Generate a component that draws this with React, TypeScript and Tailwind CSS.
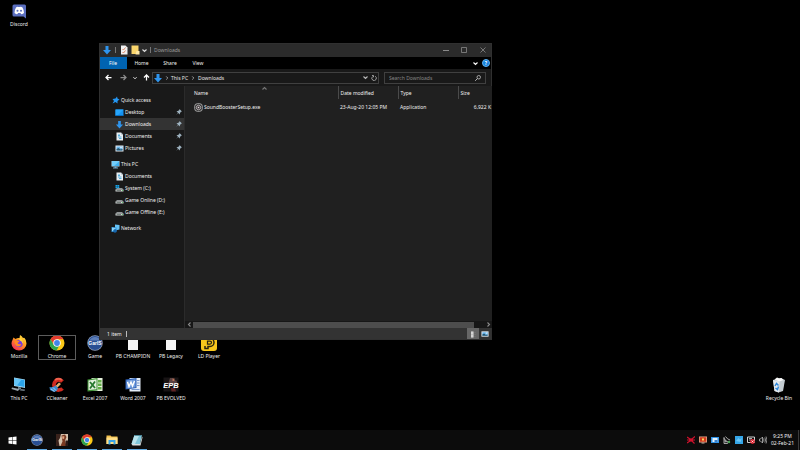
import React from "react";

type IconProps = { className?: string };

function DownArrow({ className = "size-[10px]" }: IconProps) {
  return (
    <svg viewBox="0 0 20 20" className={className} aria-hidden="true">
      <path d="M7 2h6v8h5l-8 9-8-9h5z" fill="#2f95ee" />
    </svg>
  );
}

function Chevron({ className = "size-[5px]" }: IconProps) {
  return (
    <svg viewBox="0 0 10 10" className={className} aria-hidden="true">
      <path d="M1 3l4 4 4-4" fill="none" stroke="currentColor" strokeWidth="2.2" />
    </svg>
  );
}

function Arrow({ className = "size-[7px]" }: IconProps) {
  return (
    <svg viewBox="0 0 14 14" className={className} aria-hidden="true">
      <path d="M13 7H2M7 2L2 7l5 5" fill="none" stroke="currentColor" strokeWidth="2.500" />
    </svg>
  );
}

function Pin({ className = "size-[6px]" }: IconProps) {
  return (
    <svg viewBox="0 0 12 12" className={className} aria-hidden="true">
      <path d="M7 0l5 5-2 .5L8 8l-.5 3L4.500 8 0 12l4-4.500L1 4.500 4 4l2.500-2z" fill="#9db1be" />
    </svg>
  );
}

function Star({ className = "size-[8px]" }: IconProps) {
  return (
    <svg viewBox="0 0 16 16" className={className} aria-hidden="true">
      <path d="M10 1l1 4 4 2-4 3v5l-4-3-6 3 3-5-3-4 6-1z" fill="#2497f3" />
    </svg>
  );
}

function DesktopIcon({ className = "size-[9px]" }: IconProps) {
  return (
    <svg viewBox="0 0 18 18" className={className} aria-hidden="true">
      <path d="M1 3h16v12H1z" fill="#1593f2" />
      <path d="M1 3h16L5 15H1z" fill="#27a5fb" />
      <path d="M1 14h16v2H1z" fill="#0870c4" />
    </svg>
  );
}

function DocumentIcon({ className = "size-[9px]" }: IconProps) {
  return (
    <svg viewBox="0 0 18 18" className={className} aria-hidden="true">
      <path d="M3 1h9l4 4v12H3z" fill="#e8eef2" />
      <path d="M12 1v4h4z" fill="#a9bac5" />
      <path d="M6 5h4v3H6zM6 9h7v2H6zM8 12h5v2H8z" fill="#57afe0" />
    </svg>
  );
}

function PicturesIcon({ className = "size-[9px]" }: IconProps) {
  return (
    <svg viewBox="0 0 18 18" className={className} aria-hidden="true">
      <path d="M1 3h16v12H1z" fill="#e6edf3" />
      <path d="M3 5h12v8H3z" fill="#6cb7ed" />
      <path d="M3 13v-3l4-2 4 3 4-1v3z" fill="#28566e" />
      <circle cx="12" cy="7" r="1.500" fill="#fff" />
    </svg>
  );
}

function MonitorIcon({ className = "size-[9px]" }: IconProps) {
  return (
    <svg viewBox="0 0 18 18" className={className} aria-hidden="true">
      <path d="M1 2h16v11H1z" fill="#b7dff5" />
      <path d="M2 3h14v9H2z" fill="#3fb2f2" />
      <path d="M2 3h14L6 12H2z" fill="#72cdfa" />
      <path d="M7 13h4v2h3v2H4v-2h3z" fill="#75a8c7" />
    </svg>
  );
}

function DriveIcon({ className = "size-[9px]", system = false }: IconProps & { system?: boolean }) {
  return (
    <svg viewBox="0 0 18 18" className={className} aria-hidden="true">
      <path d="M4 8h10l3 3H1z" fill="#8f9496" />
      <path d="M1 11h16v4H1z" fill="#d3d7d7" />
      <path d="M3 12.500h9V14H3z" fill="#54605d" />
      <path d="M14 12h2v2h-2z" fill="#5fc46e" />
      {system && <path d="M1 2h3.500v3H1zM5 2h3.500v3H5zM1 5.500h3.500v3H1zM5 5.500h3.500v3H5z" fill="#16a2e8" />}
    </svg>
  );
}

function NetworkIcon({ className = "size-[9px]" }: IconProps) {
  return (
    <svg viewBox="0 0 18 18" className={className} aria-hidden="true">
      <path d="M8 1l9 1v9l-9 2z" fill="#65c2f5" />
      <path d="M1 6l10 1v8L1 16z" fill="#2a8fd9" />
      <path d="M2 7l8 1-6 6-2 .5z" fill="#8bd4f8" />
      <circle cx="8" cy="14" r="3.500" fill="#1766ad" />
    </svg>
  );
}

function FolderIcon({ className = "size-[10px]" }: IconProps) {
  return (
    <svg viewBox="0 0 20 20" className={className} aria-hidden="true">
      <path d="M3 1h14v17H3z" fill="#f9d56c" />
      <path d="M13 12h6v7h-8z" fill="#ffe9a6" />
    </svg>
  );
}

function PropertiesIcon({ className = "size-[10px]" }: IconProps) {
  return (
    <svg viewBox="0 0 20 20" className={className} aria-hidden="true">
      <path d="M4 1h9l4 4v14H4z" fill="#f1f1f1" />
      <path d="M7 8l2 2 4-5M7 14l2 2 4-5" fill="none" stroke="#d97b55" strokeWidth="1.700" />
    </svg>
  );
}

function ExeIcon({ className = "size-[9px]" }: IconProps) {
  return (
    <svg viewBox="0 0 18 18" className={className} aria-hidden="true">
      <rect x="1.500" y="1.500" width="15" height="15" rx="5" fill="#222" stroke="#b9b9b9" strokeWidth="1.800" />
      <circle cx="9" cy="9" r="4.500" fill="#4c4548" stroke="#c9c4c6" strokeWidth="1.500" />
      <circle cx="9" cy="9" r="1.500" fill="#e1dadd" />
    </svg>
  );
}

function SearchIcon({ className = "size-[6px]" }: IconProps) {
  return (
    <svg viewBox="0 0 12 12" className={className} aria-hidden="true">
      <circle cx="7.500" cy="4.500" r="3.500" fill="none" stroke="currentColor" strokeWidth="1.500" />
      <path d="M5 7l-4.500 4.500" stroke="currentColor" strokeWidth="1.800" />
    </svg>
  );
}

function RefreshIcon({ className = "size-[6px]" }: IconProps) {
  return (
    <svg viewBox="0 0 12 12" className={className} aria-hidden="true">
      <path d="M8 2.500A4.500 4.500 0 1 1 3.500 3M2 1h3v3.500" fill="none" stroke="currentColor" strokeWidth="1.600" />
    </svg>
  );
}

function DiscordIcon({ className = "size-4" }: IconProps) {
  return (
    <svg viewBox="0 0 32 32" className={className} aria-hidden="true">
      <path d="M6 3h21a3 3 0 0 1 3 3v25l-5-4H6a3 3 0 0 1-3-3V6a3 3 0 0 1 3-3z" fill="#5b6fc0" />
      <path d="M10 9q3-2 4-1h4q2-1 5 1 3 5 3 11-3 3-6 2l-1-2h-5l-1 2q-3 1-6-2 0-6 3-11z" fill="#fff" />
      <circle cx="13" cy="15.500" r="2" fill="#5b6fc0" />
      <circle cx="20" cy="15.500" r="2" fill="#5b6fc0" />
    </svg>
  );
}

function FirefoxIcon({ className = "size-4" }: IconProps) {
  return (
    <svg viewBox="0 0 32 32" className={className} aria-hidden="true">
      <defs>
        <linearGradient id="fox" x1="0.900" y1="0" x2="0.200" y2="1">
          <stop offset="0" stopColor="#fff04a" />
          <stop offset="0.450" stopColor="#ff9a1f" />
          <stop offset="1" stopColor="#f5245c" />
        </linearGradient>
      </defs>
      <path d="M3 10l2-5 4 3q4-3 8-2l1-6q4 2 6 6 2-1 3 0 4 4 4 11a15 14 0 0 1-30 0q0-4 2-7z" fill="url(#fox)" />
      <circle cx="16" cy="17" r="7.500" fill="#7a3be0" />
      <path d="M7 11q6-2 10 2l-4 3q2 4 8 2-2 6-8 5-6-2-6-12z" fill="#ff8a22" />
      <path d="M19 5q6 6 5 13-2-6-8-8z" fill="#ffd83a" />
    </svg>
  );
}

function ChromeIcon({ className = "size-4" }: IconProps) {
  return (
    <svg viewBox="0 0 32 32" className={className} aria-hidden="true">
      <circle cx="16" cy="16" r="15" fill="#fbc917" />
      <path d="M3 8.500A15 15 0 0 1 29 8.500H16L9.500 19z" fill="#e33b2e" />
      <path d="M3 8.500A15 15 0 0 0 15 31l6-10.500H10z" fill="#2ea44f" />
      <circle cx="16" cy="16" r="7.500" fill="#fff" />
      <circle cx="16" cy="16" r="5.800" fill="#4285e8" />
    </svg>
  );
}

function GameIcon({ className = "size-4" }: IconProps) {
  return (
    <svg viewBox="0 0 32 32" className={className} aria-hidden="true">
      <circle cx="16" cy="16" r="15.500" fill="#8d9dba" />
      <circle cx="16" cy="16" r="14" fill="#294f93" />
      <path d="M5 11a12 12 0 0 1 22 0z" fill="#5d7eb8" />
      <text x="16" y="19.500" textAnchor="middle" fontFamily="Liberation Sans, sans-serif" fontWeight="700" fontSize="10" fill="#fff">GarIS</text>
    </svg>
  );
}

function BlankIcon({ className = "size-4" }: IconProps) {
  return (
    <svg viewBox="0 0 32 32" className={className} aria-hidden="true">
      <path d="M6 2h20v28H6z" fill="#f5f5f5" />
    </svg>
  );
}

function LdIcon({ className = "size-4" }: IconProps) {
  return (
    <svg viewBox="0 0 32 32" className={className} aria-hidden="true">
      <rect width="32" height="32" rx="6" fill="#f8c71c" />
      <path d="M8 7h10a7.500 7.500 0 0 1 0 16h-4v4H8v-5" fill="none" stroke="#2b2510" strokeWidth="3" />
      <path d="M13 12h5a3 3 0 0 1 0 6h-5z" fill="none" stroke="#2b2510" strokeWidth="2.500" />
    </svg>
  );
}

function PcIcon({ className = "size-4" }: IconProps) {
  return (
    <svg viewBox="0 0 32 32" className={className} aria-hidden="true">
      <path d="M6 1l22 4v17L6 18z" fill="#a5d6ef" />
      <path d="M7 3l20 3v14L7 16z" fill="#2ca4ea" />
      <path d="M7 3l14 2-9 12-5-1z" fill="#65c5f7" />
      <path d="M14 20l6 1v4h-6z" fill="#6c8494" />
      <path d="M2 21l15 3-3 4-13-4z" fill="#9aa6ae" />
      <path d="M20 24l8 1-1 3-9-1z" fill="#6f7b84" />
    </svg>
  );
}

function CCleanerIcon({ className = "size-4" }: IconProps) {
  return (
    <svg viewBox="0 0 32 32" className={className} aria-hidden="true">
      <path d="M27 9a10 10 0 1 0 0 14" fill="none" stroke="#cf2a1f" strokeWidth="7.500" />
      <path d="M12 6q7-5 14 0" fill="none" stroke="#f0604c" strokeWidth="4" />
      <path d="M20 11l4 3-7 7-4-3z" fill="#e0b070" />
      <path d="M1 20q8 2 12-3l5 5q-2 7-8 8l-8-4z" fill="#3b8bd0" />
      <path d="M4 24l7 5M8 21l6 6" stroke="#c6e4fb" strokeWidth="1.500" />
    </svg>
  );
}

function ExcelIcon({ className = "size-4" }: IconProps) {
  return (
    <svg viewBox="0 0 32 32" className={className} aria-hidden="true">
      <path d="M9 2h22v26H9z" fill="#e6f2dd" />
      <path d="M22 6h7v5h-7zM22 13h7v5h-7zM22 20h7v5h-7z" fill="#62ad46" />
      <path d="M1 5l20-3v25L1 29z" fill="#3f9137" />
      <path d="M3 7l16-2.500v20L3 26z" fill="#e3f0dc" />
      <path d="M6 10l10 12M16 9L6 23" stroke="#25772c" strokeWidth="3.500" />
    </svg>
  );
}

function WordIcon({ className = "size-4" }: IconProps) {
  return (
    <svg viewBox="0 0 32 32" className={className} aria-hidden="true">
      <path d="M9 2h22v27H9z" fill="#e5edf8" />
      <path d="M24 7h5M24 12h5M24 17h5M13 25h16" stroke="#7898cd" strokeWidth="2" />
      <path d="M1 5l22-3v20L1 25z" fill="#2c5fb4" />
      <path d="M3 7l18-2.500v16L3 23z" fill="#6f9bdd" />
      <path d="M5 10l3 9 4-9 3 8 4-10" fill="none" stroke="#fff" strokeWidth="2.800" />
    </svg>
  );
}

function EpbIcon({ className = "size-4" }: IconProps) {
  return (
    <svg viewBox="0 0 32 32" className={className} aria-hidden="true">
      <path d="M1 1h30v28H1z" fill="#171314" />
      <path d="M14 2h6l1 5h6l2 8H10z" fill="#5a4141" />
      <path d="M19 3h4v5h-4z" fill="#b77158" />
      <path d="M16 22h8l2 7h-9z" fill="#5e2323" />
      <text x="16" y="22" textAnchor="middle" fontFamily="Liberation Sans, sans-serif" fontWeight="700" fontStyle="italic" fontSize="15" fill="#fff">EPB</text>
    </svg>
  );
}

function RecycleIcon({ className = "size-4" }: IconProps) {
  return (
    <svg viewBox="0 0 32 32" className={className} aria-hidden="true">
      <path d="M4 6l15-4 9 4-4 22-9 3-8-3z" fill="#c4ccd2" />
      <path d="M4 6l13 3-1 22-9-3z" fill="#e3e9ed" />
      <path d="M7 5l5-4 5 2 4-1 4 4-8 3z" fill="#fafafa" />
      <path d="M8 18l3-5 4 4M15 19l-2 6-4-3" fill="none" stroke="#2a86dc" strokeWidth="2.800" />
    </svg>
  );
}

function WindowsIcon({ className = "size-[9px]" }: IconProps) {
  return (
    <svg viewBox="0 0 18 18" className={className} aria-hidden="true">
      <path d="M1 3l7-1v6.500H1zM9 2l8-1v7.500H9zM1 9.500h7V16l-7-1zM9 9.500h8V17l-8-1z" fill="#fff" />
    </svg>
  );
}

function PortraitIcon({ className = "size-3" }: IconProps) {
  return (
    <svg viewBox="0 0 24 24" className={className} aria-hidden="true">
      <path d="M0 0h24v24H0z" fill="#d6c3ae" />
      <path d="M0 0h10l-2 8-3 5 2 11H0z" fill="#3a231c" />
      <path d="M11 3l7-2 3 5-3 7 3 11H9l4-9z" fill="#7a3a22" />
      <path d="M13 4l4 1-1 5-4-1z" fill="#e0a684" />
      <path d="M19 13h5v11h-5z" fill="#2b1815" />
    </svg>
  );
}

function ExplorerIcon({ className = "size-3" }: IconProps) {
  return (
    <svg viewBox="0 0 24 24" className={className} aria-hidden="true">
      <path d="M1 3h8l2 2h12v15H1z" fill="#f3c04b" />
      <path d="M1 7h22v13H1z" fill="#ffe08a" />
      <path d="M5 12h14v9h-4v-5H9v5H5z" fill="#3aa5e8" />
    </svg>
  );
}

function NotepadIcon({ className = "size-3" }: IconProps) {
  return (
    <svg viewBox="0 0 24 24" className={className} aria-hidden="true">
      <path d="M7 2h15l-4 18H1z" fill="#7fc6da" />
      <path d="M7 2h10L8 20H1z" fill="#b9e3ec" />
      <path d="M1 20h17l4-15 1 2-4 16H3z" fill="#d9dfe0" />
      <path d="M7 2h15l-.5 2H6z" fill="#4c8797" />
    </svg>
  );
}

function TrayBug() {
  return (
    <svg viewBox="0 0 16 16" className="size-2" aria-hidden="true">
      <path d="M0 2l6 4M16 1l-6 5M0 14l6-4M15 15l-5-5M0 8h16" stroke="#d0122d" strokeWidth="2.200" />
      <ellipse cx="8" cy="8" rx="4.500" ry="3.500" fill="#d0122d" />
    </svg>
  );
}

function TrayRed() {
  return (
    <svg viewBox="0 0 16 16" className="size-2" aria-hidden="true">
      <path d="M0 1h16v12H0z" fill="#e7a98c" />
      <path d="M1.500 2.500h13v9h-13z" fill="#cf3a1d" />
      <path d="M6 5h4v4H6z" fill="#ffd75b" />
      <path d="M5 13h6v2H5z" fill="#d3b5a5" />
    </svg>
  );
}

function TrayBlue() {
  return (
    <svg viewBox="0 0 16 16" className="size-2" aria-hidden="true">
      <path d="M0 2h16v12H0z" fill="#3294e8" />
      <path d="M3 4h10v8H3z" fill="#e5f3fd" />
      <path d="M7 8h6v4H7z" fill="#3b7fc8" />
    </svg>
  );
}

function TrayDish() {
  return (
    <svg viewBox="0 0 16 16" className="size-2" aria-hidden="true">
      <path d="M2 3q0 8 9 9l-2 3H2zM5 1q4 6 9 7" fill="none" stroke="#c9c9c9" strokeWidth="1.600" />
      <path d="M3 5l7 7-7 1z" fill="#999" />
      <circle cx="12" cy="12" r="2.500" fill="#49a355" />
    </svg>
  );
}

function TrayTeal() {
  return (
    <svg viewBox="0 0 16 16" className="size-2" aria-hidden="true">
      <path d="M0 0h16v16H0z" fill="#35a6e8" />
      <path d="M2 10l5-6 3 3 4-3-3 8z" fill="#6bc5f5" />
    </svg>
  );
}

function TrayBlocked() {
  return (
    <svg viewBox="0 0 16 16" className="size-2" aria-hidden="true">
      <path d="M1 2h14v11H1z" fill="none" stroke="#e4e4e4" strokeWidth="1.800" />
      <path d="M4 5h6M4 8h4" stroke="#e4e4e4" strokeWidth="1.500" />
      <circle cx="11" cy="11" r="4.800" fill="#de2431" />
      <path d="M9 9l4 4M13 9l-4 4" stroke="#fff" strokeWidth="1.400" />
    </svg>
  );
}

function TrayVolume() {
  return (
    <svg viewBox="0 0 16 16" className="size-2" aria-hidden="true">
      <path d="M1 6h2l4-4v12l-4-4H1z" fill="none" stroke="#ddd" strokeWidth="1.300" />
      <path d="M9 5q2 3 0 6M11.500 3q3.500 5 0 10M14 1q4 7 0 14" fill="none" stroke="#ddd" strokeWidth="1.200" />
    </svg>
  );
}

function Shortcut({ icon, label, selected = false }: { icon: React.ReactNode; label: string; selected?: boolean }) {
  return (
    <button
      type="button"
      className={`flex h-[25px] w-[38px] flex-col items-center gap-px whitespace-nowrap leading-2 ${
        selected ? "outline outline-1 -outline-offset-1 outline-[#5c5c5c]" : ""
      }`}
    >
      {icon}
      <span>{label}</span>
    </button>
  );
}

type NavItem = { label: string; icon: React.ReactNode; root?: boolean; pinned?: boolean; active?: boolean };

const navGroups: NavItem[][] = [
  [
    { label: "Quick access", icon: <Star />, root: true },
    { label: "Desktop", icon: <DesktopIcon />, pinned: true },
    { label: "Downloads", icon: <DownArrow className="size-[9px]" />, pinned: true, active: true },
    { label: "Documents", icon: <DocumentIcon />, pinned: true },
    { label: "Pictures", icon: <PicturesIcon />, pinned: true },
  ],
  [
    { label: "This PC", icon: <MonitorIcon />, root: true },
    { label: "Documents", icon: <DocumentIcon /> },
    { label: "System (C:)", icon: <DriveIcon system /> },
    { label: "Game Online (D:)", icon: <DriveIcon /> },
    { label: "Game Offline (E:)", icon: <DriveIcon /> },
  ],
  [{ label: "Network", icon: <NetworkIcon />, root: true }],
];

function Sidebar() {
  return (
    <nav aria-label="Folders" className="flex w-[86px] shrink-0 flex-col gap-1 border-r border-[#2b2b2b] bg-[#191919] pt-2">
      {navGroups.map((group, i) => (
        <ul key={i}>
          {group.map((item) => (
            <li key={item.label}>
              <button
                type="button"
                className={`flex h-3 w-full items-center gap-px pr-[2px] whitespace-nowrap ${item.root ? "pl-3" : "pl-4"} ${
                  item.active ? "bg-[#333333]" : ""
                }`}
              >
                <span className="flex w-[9px] justify-center">{item.icon}</span>
                <span>{item.label}</span>
                {item.pinned && <Pin className="ml-auto size-[6px]" />}
              </button>
            </li>
          ))}
        </ul>
      ))}
    </nav>
  );
}

function FileTable() {
  return (
    <table className="w-full table-fixed text-left whitespace-nowrap">
      <thead>
        <tr className="h-[13px]">
          <th scope="col" className="w-[153px] border-r border-[#4a4a4a] pl-[9px] font-normal">Name</th>
          <th scope="col" className="w-[60px] border-r border-[#4a4a4a] pl-[2px] font-normal">Date modified</th>
          <th scope="col" className="w-[60px] border-r border-[#4a4a4a] pl-[2px] font-normal">Type</th>
          <th scope="col" className="pl-[2px] font-normal">Size</th>
        </tr>
      </thead>
      <tbody>
        <tr className="h-4">
          <td className="pl-[9px]">
            <span className="flex items-center gap-px">
              <ExeIcon />
              SoundBoosterSetup.exe
            </span>
          </td>
          <td className="pl-[2px]">23-Aug-20 12:05 PM</td>
          <td className="pl-[2px]">Application</td>
          <td className="pr-px text-right">6,922 K</td>
        </tr>
      </tbody>
    </table>
  );
}

function ExplorerWindow() {
  return (
    <section
      aria-label="Downloads"
      className="absolute top-[43px] left-[99px] flex h-[297px] w-[393px] flex-col overflow-hidden bg-[#191919] outline outline-1 -outline-offset-1 outline-[#303030]"
    >
      <header className="flex h-[14px] shrink-0 items-center bg-[#2b2b2b] pl-[3px] text-[#9c9c9c]">
        <DownArrow />
        <span className="mx-[3px] h-[6px] w-px bg-[#777777]" />
        <PropertiesIcon />
        <FolderIcon className="ml-px size-[10px]" />
        <Chevron className="ml-[2px] size-[5px] text-[#dddddd]" />
        <span className="mx-[3px] h-[6px] w-px bg-[#777777]" />
        <h1>Downloads</h1>
        <div className="ml-auto flex">
          <button type="button" aria-label="Minimize" className="flex w-[19px] justify-center">
            <svg viewBox="0 0 12 12" className="size-[6px]"><path d="M0 7h12" stroke="#8a8a8a" strokeWidth="2" /></svg>
          </button>
          <button type="button" aria-label="Maximize" className="flex w-[18px] justify-center">
            <svg viewBox="0 0 12 12" className="size-[6px]"><path d="M1 1h10v10H1z" fill="none" stroke="#8a8a8a" strokeWidth="1.600" /></svg>
          </button>
          <button type="button" aria-label="Close" className="flex w-[19px] justify-center">
            <svg viewBox="0 0 12 12" className="size-[6px]"><path d="M1 1l10 10M11 1L1 11" stroke="#8a8a8a" strokeWidth="1.600" /></svg>
          </button>
        </div>
      </header>

      <div className="flex h-3 shrink-0 items-center bg-black">
        <button type="button" className="h-3 w-[28px] bg-[#0063b1] text-white">File</button>
        <button type="button" className="w-[29px]">Home</button>
        <button type="button" className="w-[28px]">Share</button>
        <button type="button" className="w-[28px]">View</button>
        <button type="button" aria-label="Expand ribbon" className="mr-1 ml-auto text-white"><Chevron className="size-[5px]" /></button>
        <button type="button" aria-label="Help" className="mr-[2px] flex size-2 items-center justify-center rounded-full border border-[#5fb0ee] bg-[#1580dc] font-bold text-white">?</button>
      </div>

      <div className="flex h-[17px] shrink-0 items-center px-[6px] text-white">
        <button type="button" aria-label="Back"><Arrow /></button>
        <button type="button" aria-label="Forward" className="ml-2 text-[#8c8c8c]"><Arrow className="size-[7px] rotate-180" /></button>
        <button type="button" aria-label="Recent locations" className="ml-[6px]"><Chevron className="size-[4px]" /></button>
        <button type="button" aria-label="Up" className="ml-[6px]"><Arrow className="size-[7px] rotate-90" /></button>
        <nav aria-label="Address" className="ml-[2px] flex h-3 flex-1 items-center border border-[#404040] pr-px text-[#e4e4e4]">
          <DownArrow />
          <Chevron className="ml-[2px] size-[4px] -rotate-90 text-[#aaaaaa]" />
          <button type="button" className="ml-[2px]">This PC</button>
          <Chevron className="mx-[3px] size-[4px] -rotate-90 text-[#aaaaaa]" />
          <button type="button">Downloads</button>
          <button type="button" aria-label="Previous locations" className="mr-[3px] ml-auto text-[#bbbbbb]"><Chevron /></button>
          <button type="button" aria-label="Refresh" className="text-[#bbbbbb]"><RefreshIcon /></button>
        </nav>
        <label className="ml-[5px] flex h-3 w-[102px] items-center border border-[#404040] px-1 text-[#cccccc]">
          <input
            type="search"
            aria-label="Search Downloads"
            placeholder="Search Downloads"
            className="h-2 w-0 flex-1 bg-transparent outline-none placeholder:text-[#858585]"
          />
          <SearchIcon />
        </label>
      </div>

      <div className="flex min-h-0 flex-1">
        <Sidebar />
        <main className="relative flex min-w-0 flex-1 flex-col bg-[#202020]">
          <FileTable />
          <Chevron className="absolute top-0 left-[77px] size-[5px] rotate-180 text-[#777777]" />
          <div className="mt-auto flex h-[7px] items-center bg-[#171717] pr-px pl-[2px] text-[#888888]">
            <Chevron className="size-[5px] rotate-90" />
            <div className="mr-3 ml-px h-[6px] flex-1 bg-[#4d4d4d]" />
            <Chevron className="size-[5px] -rotate-90" />
          </div>
        </main>
      </div>

      <footer className="flex h-3 shrink-0 items-center bg-[#333333] pr-px pl-2">
        <span>1 item</span>
        <span className="ml-1 h-[6px] w-px bg-[#bbbbbb]" />
        <button type="button" aria-label="Details view" className="ml-auto flex h-3 w-3 items-center justify-center bg-[#666666]">
          <svg viewBox="0 0 14 14" className="size-[7px]"><path d="M2 1h5v12H2z" fill="#e8e8e8" /><path d="M2 4h5M2 7h5M2 10h5" stroke="#999" /><path d="M8 3h4M8 7h4M8 11h4" stroke="#777" /></svg>
        </button>
        <button type="button" aria-label="Thumbnail view" className="flex h-3 w-3 items-center justify-center">
          <PicturesIcon className="size-2" />
        </button>
      </footer>
    </section>
  );
}

const runningApps = [
  { label: "Game", icon: <GameIcon className="size-3" /> },
  { label: "Profile", icon: <PortraitIcon /> },
  { label: "Chrome", icon: <ChromeIcon className="size-3" /> },
  { label: "File Explorer", icon: <ExplorerIcon /> },
  { label: "Notepad", icon: <NotepadIcon /> },
];

const trayItems = [
  { label: "Antivirus", icon: <TrayBug /> },
  { label: "Display", icon: <TrayRed /> },
  { label: "Graphics", icon: <TrayBlue /> },
  { label: "Connection", icon: <TrayDish /> },
  { label: "Weather", icon: <TrayTeal /> },
  { label: "Network", icon: <TrayBlocked /> },
  { label: "Volume", icon: <TrayVolume /> },
];

function Taskbar() {
  return (
    <footer className="flex h-5 shrink-0 items-stretch bg-[#0c0c0c]">
      <button type="button" aria-label="Start" className="flex w-6 items-center justify-center"><WindowsIcon /></button>
      <div className="ml-[3px] flex gap-[5px]">
        {runningApps.map((app) => (
          <button key={app.label} type="button" aria-label={app.label} className="flex w-5 items-center justify-center border-b border-[#5fa8e0]">
            {app.icon}
          </button>
        ))}
      </div>
      <div className="ml-auto flex items-center gap-1">
        {trayItems.map((item) => (
          <button key={item.label} type="button" aria-label={item.label}>{item.icon}</button>
        ))}
      </div>
      <time dateTime="2021-02-02T21:25" className="flex w-[32px] flex-col justify-center border-r border-[#3a3a3a] text-center leading-[7px]">
        <span>9:25 PM</span>
        <span>02-Feb-21</span>
      </time>
      <div className="w-px" />
    </footer>
  );
}

export default function App() {
  return (
    <div className="flex min-h-screen flex-col bg-black font-['Noto_Sans','Open_Sans',sans-serif] text-[5px] leading-2 text-[#f0f0f0]">
      <div className="relative flex flex-1 flex-col justify-between pt-[3px] pb-7">
        <Shortcut icon={<DiscordIcon />} label="Discord" />
        <div className="flex items-end justify-between pr-[2px]">
          <div className="grid grid-cols-[repeat(6,38px)] gap-y-[17px]">
            <Shortcut icon={<FirefoxIcon />} label="Mozilla" />
            <Shortcut icon={<ChromeIcon />} label="Chrome" selected />
            <Shortcut icon={<GameIcon />} label="Game" />
            <Shortcut icon={<BlankIcon />} label="PB CHAMPION" />
            <Shortcut icon={<BlankIcon />} label="PB Legacy" />
            <Shortcut icon={<LdIcon />} label="LD Player" />
            <Shortcut icon={<PcIcon />} label="This PC" />
            <Shortcut icon={<CCleanerIcon />} label="CCleaner" />
            <Shortcut icon={<ExcelIcon />} label="Excel 2007" />
            <Shortcut icon={<WordIcon />} label="Word 2007" />
            <Shortcut icon={<EpbIcon />} label="PB EVOLVED" />
          </div>
          <Shortcut icon={<RecycleIcon />} label="Recycle Bin" />
        </div>
        <ExplorerWindow />
      </div>
      <Taskbar />
    </div>
  );
}
